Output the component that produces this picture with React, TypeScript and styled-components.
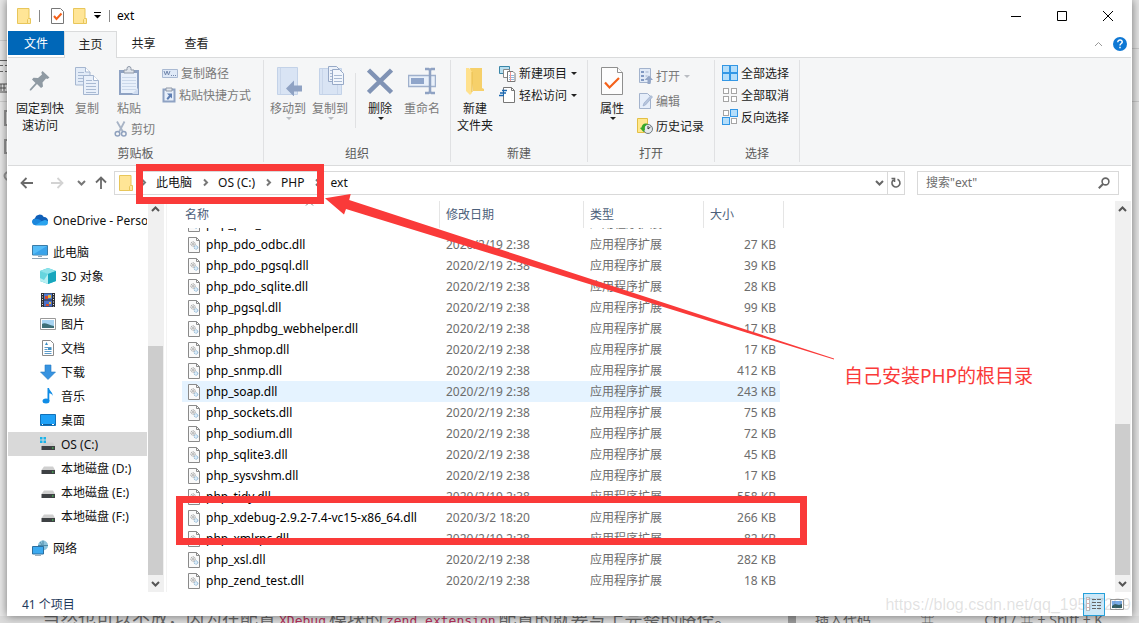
import React from "react";
import styled, { createGlobalStyle } from "styled-components";

const GlobalStyle = createGlobalStyle`
  * { box-sizing: border-box; }
  html, body { margin: 0; padding: 0; }
  body {
    font-family: "Noto Sans", "Noto Sans CJK SC", sans-serif;
    font-size: 12px;
    line-height: 17px;
    color: #1a1a1a;
    overflow: hidden;
  }
  button, input { font: inherit; color: inherit; background: none; border: 0; padding: 0; margin: 0; }
  svg { display: block; flex: none; }
`;

/* ---------- Desktop and the page behind the window ---------- */

const Desktop = styled.div`
  display: grid;
  grid-template-columns: 7px minmax(0, 1fr) 7px;
  grid-template-rows: minmax(0, 1fr) 7px;
  height: 100vh;
  background: #e6e6e6;
  overflow: hidden;
`;

const LeftEdge = styled.div`
  background: #e9e9e9;
  overflow: hidden;
`;

const RightEdge = styled.div`
  background: #e4e4e4;
  overflow: hidden;
`;

const BottomEdge = styled.div`
  grid-column: 1 / -1;
  display: flex;
  align-items: center;
  height: 7px;
  background: #dcdcdc;
  color: #666;
  white-space: nowrap;
  overflow: hidden;
`;

const Article = styled.p`
  flex: 0 0 788px;
  margin: 0;
  padding-left: 42px;
  font-size: 18px;
  line-height: 24px;
`;

const Code = styled.code`
  font-family: "DejaVu Sans Mono", monospace;
  font-size: 13px;
  color: #b5305a;
  margin: 0 3px;
`;

const PageBar = styled.span`
  width: 8px;
  height: 7px;
  background: #999;
`;

const Shortcuts = styled.div`
  display: flex;
  flex: 1;
  padding: 0 36px 0 19px;
  font-size: 14px;
  line-height: 20px;
  justify-content: space-between;
`;

/* ---------- Window frame ---------- */

const Window = styled.main`
  position: relative;
  display: flex;
  flex-direction: column;
  min-width: 0;
  background: #fff;
  border: solid #fff;
  border-width: 0 1px;
  box-shadow: 0 0 9px rgba(0, 0, 0, 0.5);
`;

const TitleBar = styled.header`
  display: flex;
  align-items: center;
  height: 31px;
  padding-left: 9px;
`;

const QuickAccess = styled.div`
  display: flex;
  align-items: center;
  gap: 8px;
`;

const QuickButtons = styled.div`
  display: flex;
  align-items: center;
  gap: 5px;
`;

const QuickSeparator = styled.span`
  width: 1px;
  height: 12px;
  background: #888;
`;

const Title = styled.h1`
  margin: 0 0 0 7px;
  flex: 1;
  font-size: 12px;
  font-weight: 400;
  color: #000;
`;

const CaptionButton = styled.button`
  display: flex;
  align-items: center;
  justify-content: center;
  width: 46px;
  height: 30px;
`;

const IconButton = styled.button<{ $width?: number }>`
  display: flex;
  align-items: center;
  justify-content: center;
  width: ${(p) => (p.$width ? `${p.$width}px` : "auto")};
`;

/* ---------- Ribbon ---------- */

const Tabs = styled.nav`
  display: flex;
  align-items: flex-start;
  height: 27px;
  border-bottom: 1px solid #dadbdc;
`;

const Tab = styled.button<{ $kind?: "file" | "active" }>`
  width: ${(p) => (p.$kind === "file" ? 56 : 53)}px;
  height: ${(p) => (p.$kind === "active" ? 27 : 24)}px;
  padding-bottom: ${(p) => (p.$kind === "active" ? 2 : 0)}px;
  color: ${(p) => (p.$kind === "file" ? "#fff" : "#222")};
  background: ${(p) => (p.$kind === "file" ? "#0067b8" : p.$kind === "active" ? "#f5f6f7" : "none")};
  border: ${(p) => (p.$kind === "active" ? "1px solid #dadbdc" : "0")};
  border-bottom: 0;
`;

const TabTools = styled.div`
  display: flex;
  align-items: center;
  gap: 10px;
  height: 26px;
  margin-left: auto;
  padding-right: 4px;
`;

const Ribbon = styled.section`
  display: flex;
  height: 108px;
  padding: 2px 0 3px;
  background: #f5f6f7;
  border-bottom: 1px solid #dadbdc;
`;

const Group = styled.section<{ $width: number }>`
  display: flex;
  flex-direction: column;
  justify-content: space-between;
  width: ${(p) => p.$width}px;
  padding: 0 3px;
  border-right: 1px solid #e0e1e3;
`;

const GroupItems = styled.div`
  display: flex;
`;

const GroupLabel = styled.h2`
  margin: 0;
  font-size: 12px;
  font-weight: 400;
  color: #5a5a5a;
  text-align: center;
`;

const LargeButton = styled.button<{ $width?: number; $muted?: boolean }>`
  display: flex;
  flex: none;
  flex-direction: column;
  align-items: center;
  width: ${(p) => p.$width ?? 42}px;
  padding-top: 5px;
  color: ${(p) => (p.$muted ? "#7a7a7a" : "#1a1a1a")};
  white-space: nowrap;
`;

const LargeIcon = styled.span`
  display: flex;
  align-items: center;
  height: 35px;
  padding-bottom: 4px;
`;

const ToolColumn = styled.div<{ $top?: number; $gap?: number; $left?: number }>`
  display: flex;
  flex-direction: column;
  align-items: flex-start;
  gap: ${(p) => p.$gap ?? 4}px;
  margin-left: ${(p) => p.$left ?? 4}px;
  padding-top: ${(p) => p.$top ?? 4}px;
`;

const PasteColumn = styled.div`
  display: flex;
  flex-direction: column;
  gap: 3px;
  width: 48px;
`;

const SmallButton = styled.button<{ $muted?: boolean }>`
  display: flex;
  align-items: center;
  gap: 3px;
  height: 18px;
  color: ${(p) => (p.$muted ? "#7a7a7a" : "#1a1a1a")};
  white-space: nowrap;
`;

const ItemSeparator = styled.span`
  width: 1px;
  height: 55px;
  margin: 13px 3px 0 4px;
  background: #e0e1e3;
`;

/* ---------- Address row ---------- */

const AddressRow = styled.div`
  display: flex;
  align-items: center;
  height: 35px;
  padding: 0 12px 2px 4px;
`;

const AddressBox = styled.div`
  display: flex;
  flex: 1;
  align-items: center;
  height: 24px;
  margin-left: 2px;
  padding-left: 4px;
  border: 1px solid #d9d9d9;
`;

const Crumbs = styled.ol`
  display: flex;
  flex: 1;
  margin: 0 0 0 -3px;
  padding: 0;
  list-style: none;
`;

const Crumb = styled.li`
  display: flex;
  align-items: center;
`;

const CrumbLink = styled.a`
  color: #111;
  text-decoration: none;
`;

const CrumbArrow = styled.span`
  display: flex;
  justify-content: center;
  width: 26px;
`;

const Refresh = styled.button`
  display: flex;
  align-items: center;
  justify-content: center;
  width: 17px;
  height: 22px;
  border-left: 1px solid #d9d9d9;
`;

const SearchBox = styled.label`
  display: flex;
  align-items: center;
  width: 202px;
  height: 24px;
  margin-left: 12px;
  padding: 0 8px;
  border: 1px solid #d9d9d9;
`;

const SearchInput = styled.input`
  flex: 1;
  min-width: 0;
  outline: 0;
  &::placeholder { color: #6d6d6d; opacity: 1; }
`;

/* ---------- Body ---------- */

const Body = styled.div`
  display: flex;
  flex: 1;
  min-height: 0;
`;

const Navigation = styled.nav`
  display: flex;
  flex-direction: column;
  gap: 8px;
  width: 140px;
  padding: 7px 1px 0 0;
`;

const NavSection = styled.div`
  overflow: hidden;
`;

const NavItem = styled.a<{ $nested?: boolean; $selected?: boolean }>`
  display: flex;
  align-items: center;
  gap: 5px;
  height: 24px;
  padding-left: ${(p) => (p.$nested ? 32 : 24)}px;
  color: #111;
  background: ${(p) => (p.$selected ? "#d9d9d9" : "transparent")};
  text-decoration: none;
  white-space: nowrap;
`;

const ScrollTrack = styled.div`
  display: flex;
  flex-direction: column;
  width: 16px;
  background: #f0f0f0;
`;

const ScrollButton = styled.button`
  display: flex;
  align-items: center;
  justify-content: center;
  height: 17px;
  padding-right: 1px;
`;

const ScrollSpace = styled.div<{ $grow: number; $thumb?: boolean }>`
  flex: ${(p) => p.$grow} 1 0;
  margin-right: 1px;
  background: ${(p) => (p.$thumb ? "#cdcdcd" : "transparent")};
`;

const Files = styled.section`
  display: flex;
  flex: 1;
  min-width: 0;
  margin-left: 2px;
  padding-left: 15px;
  border-left: 1px solid #f3f3f3;
`;

const FileTable = styled.table`
  display: flex;
  flex: 1;
  flex-direction: column;
  min-width: 0;
`;

const TableHead = styled.thead`
  display: block;
`;

const HeaderRow = styled.tr`
  display: grid;
  grid-template-columns: 258px 144px 120px 80px;
  height: 27px;
`;

const HeaderCell = styled.th<{ $first?: boolean }>`
  position: relative;
  padding: 5px 0 0 ${(p) => (p.$first ? 3 : 6)}px;
  font-weight: 400;
  color: #4c607a;
  text-align: left;
  border-right: 1px solid #e5e5e5;
`;

const SortMark = styled.svg`
  position: absolute;
  top: 0;
  left: 48%;
`;

const TableBody = styled.tbody`
  display: flex;
  flex: 1;
  flex-direction: column;
  justify-content: flex-end;
  min-height: 0;
  padding-bottom: 1px;
  overflow: hidden;
`;

const FileRow = styled.tr<{ $hover?: boolean }>`
  display: grid;
  flex: none;
  grid-template-columns: 258px 144px 120px 76px;
  align-items: center;
  width: 598px;
  height: 21px;
  background: ${(p) => (p.$hover ? "#e5f3ff" : "transparent")};
`;

const NameCell = styled.td`
  display: flex;
  align-items: center;
  gap: 6px;
  padding: 0 0 0 6px;
  color: #000;
  white-space: nowrap;
`;

const InfoCell = styled.td<{ $right?: boolean }>`
  padding: 0 ${(p) => (p.$right ? 4 : 0)}px 0 6px;
  color: #6d6d6d;
  text-align: ${(p) => (p.$right ? "right" : "left")};
`;

const StatusBar = styled.footer`
  display: flex;
  align-items: center;
  height: 24px;
  padding: 0 7px 0 14px;
  color: #1e395b;
`;

const ViewButtons = styled.div`
  display: flex;
  align-items: center;
  gap: 4px;
  margin-left: auto;
`;

const ViewButton = styled.button<{ $on?: boolean }>`
  display: flex;
  align-items: center;
  justify-content: center;
  width: ${(p) => (p.$on ? 22 : 15)}px;
  height: 23px;
  background: ${(p) => (p.$on ? "#cce8f8" : "none")};
  border: ${(p) => (p.$on ? "1px solid #26a0da" : "0")};
`;

/* ---------- Marks drawn over the window ---------- */

const MarkBox = styled.div<{ $x: number; $y: number; $w: number; $h: number }>`
  position: absolute;
  left: ${(p) => p.$x}px;
  top: ${(p) => p.$y}px;
  width: ${(p) => p.$w}px;
  height: ${(p) => p.$h}px;
  border: 7px solid #fa3a39;
  pointer-events: none;
`;

const MarkArrow = styled.svg`
  position: absolute;
  left: 316px;
  top: 190px;
  pointer-events: none;
`;

const MarkNote = styled.p`
  position: absolute;
  left: 836px;
  top: 363px;
  margin: 0;
  font-size: 19px;
  line-height: 26px;
  color: #fa3a39;
`;

const Watermark = styled.span`
  position: absolute;
  right: 0;
  bottom: 0;
  font-family: "Liberation Sans", sans-serif;
  font-size: 16px;
  line-height: 22px;
  color: rgba(120, 120, 120, 0.22);
`;

/* ---------- Icons ---------- */

const Folder = () => (
  <svg width="14" height="16" viewBox="0 0 14 16">
    <path d="M.5.5h11.500v15H.5z" fill="#ffe596" stroke="#e8c65a" />
    <path d="M11.500 10.500h2v5h-3v-4z" fill="#ffe9a5" stroke="#e8c65a" />
  </svg>
);

const CheckDoc = ({ large }: { large?: boolean }) => (
  <svg width={large ? 22 : 13} height={large ? 30 : 16} viewBox={large ? "0 0 22 30" : "0 0 13 16"}>
    {large ? (
      <>
        <path d="M.5 1.500h16l5 5v22H.5z" fill="#fdfdfd" stroke="#8f8f8f" />
        <path d="M16.500 1.500v5h5" fill="#fff" stroke="#8f8f8f" />
        <path d="M4 16.500l4.500 5 9.500-9.500" fill="none" stroke="#f4611a" strokeWidth="2.200" />
      </>
    ) : (
      <>
        <path d="M.5.5h9l3 3v12H.5z" fill="#fff" stroke="#777" />
        <path d="M3 8l2.500 3 5-5.500" fill="none" stroke="#f4611a" strokeWidth="2" />
      </>
    )}
  </svg>
);

const DropArrow = ({ muted }: { muted?: boolean }) => (
  <svg width="7" height="3" viewBox="0 0 7 3">
    <path d="M1 0h6L4 3z" fill={muted ? "#b9bcc2" : "#222"} />
  </svg>
);

const PinIcon = () => (
  <svg width="22" height="22" viewBox="0 0 22 22">
    <path d="M13.500 1l7 6.500-2 1.500-1.500-.5-3.500 4 .5 4-2 1.500-4-4L2 20.500H.8v-1.200L6.500 13 3 9.500 4.500 7.800 9 8l4-3.500-.7-2z" fill="#8f9aa3" />
  </svg>
);

const lines = (x: number, y: number, w: number, n: number, step = 3, c = "#a9bad3") =>
  Array.from({ length: n }, (_, i) => <path key={i} d={`M${x} ${y + i * step}h${w}`} stroke={c} fill="none" />);

const CopyIcon = () => (
  <svg width="24" height="28" viewBox="0 0 24 28">
    <path d="M.5.5h10l4.500 4.500v13H.5z" fill="#e3ecf8" stroke="#a5b6d0" />
    <path d="M10.500.5v4.500h4.500" fill="#fff" stroke="#a5b6d0" />
    {lines(3, 5.5, 6, 1)}
    {lines(3, 8.5, 10, 3)}
    <path d="M8.500 8.500h10l5 5v14h-15z" fill="#e9f0fa" stroke="#a5b6d0" />
    <path d="M18.500 8.500v5h5" fill="#fff" stroke="#a5b6d0" />
    {lines(11, 13.5, 6, 1)}
    {lines(11, 16.5, 10, 4)}
  </svg>
);

const PasteIcon = () => (
  <svg width="20" height="29" viewBox="0 0 20 29">
    <path d="M0 4h20v25H0z" fill="#8ea2c3" />
    <path d="M2 7h16v20H2z" fill="#e8f0fb" />
    {lines(3, 11.5, 14, 5, 3, "#cbd8ea")}
    <path d="M5 7V4h3V2.500a2 2 0 0 1 4 0V4h3v3z" fill="#dfe4eb" stroke="#8f99a8" />
    <path d="M13 28l6-6v6z" fill="#cfdcf0" />
  </svg>
);

const ScissorsIcon = () => (
  <svg width="14" height="16" viewBox="0 0 14 16">
    <path d="M3 .5l6 10.500M10.500.5L5 11" fill="none" stroke="#a8b4c6" strokeWidth="1.800" />
    <circle cx="3.500" cy="12.800" r="2.300" fill="none" stroke="#8fa1be" strokeWidth="1.500" />
    <circle cx="9.800" cy="12.800" r="2.300" fill="none" stroke="#8fa1be" strokeWidth="1.500" />
  </svg>
);

const PathIcon = () => (
  <svg width="16" height="9" viewBox="0 0 16 9">
    <path d="M.5.5h15v8H.5z" fill="#dfe9f7" stroke="#a9b9d2" />
    <path d="M2 2l1.500 4L5 2l1.500 4L8 2M9 6.500h1M11 6.500h1M13 6.500h1" fill="none" stroke="#7388ad" />
  </svg>
);

const ShortcutIcon = () => (
  <svg width="14" height="16" viewBox="0 0 14 16">
    <path d="M1.500 2.500h11v12h-11z" fill="#e8f0fb" stroke="#8ea2c3" strokeWidth="2" />
    <path d="M4 1h6v3H4z" fill="#e3e7ed" stroke="#8f99a8" />
    <path d="M5 6.500h5v5L8.500 10 6 13l-1.500-1.500L7 8.500z" fill="#5f7fb3" />
  </svg>
);

const MoveToIcon = () => (
  <svg width="28" height="30" viewBox="0 0 28 30">
    <path d="M3.500 1.500h20v27h-20z" fill="#d9e4f4" stroke="#c3d2e8" />
    <path d="M6.500 2v26" stroke="#c9d6ea" />
    <path d="M12 22.500l8-8v5h8v6h-8v5z" fill="#8fa2c3" />
  </svg>
);

const CopyToIcon = () => (
  <svg width="28" height="32" viewBox="0 0 28 32">
    <path d="M3.500 3.500h22v26h-22z" fill="#d9e4f4" stroke="#c3d2e8" />
    <path d="M6.500 4v25M21.500 20v9" stroke="#c9d6ea" />
    <path d="M12.500 1.500h8l3 3v12h-11z" fill="#edf2fa" stroke="#97a9c7" />
    {lines(14, 5.5, 5, 4)}
    <path d="M16.500 4.500h7l4 4v11h-11z" fill="#f2f6fc" stroke="#97a9c7" />
    {lines(18, 10.5, 8, 3)}
  </svg>
);

const DeleteIcon = () => (
  <svg width="26" height="28" viewBox="0 0 26 28">
    <path d="M1.500 3l23 22.500M24.500 3l-23 22.500" stroke="#8093b5" strokeWidth="4.500" fill="none" />
  </svg>
);

const RenameIcon = () => (
  <svg width="28" height="28" viewBox="0 0 28 28">
    <path d="M.5 8.500h27v11H.5z" fill="#e9f0fa" stroke="#9fb0cc" strokeWidth="1.500" />
    <path d="M3 11h13v6H3z" fill="#8fa5ca" />
    <path d="M17 2h3.500l1.500 1 1.500-1H27M17 26h3.500l1.500-1 1.500 1H27M22 3v22" fill="none" stroke="#8fa2c3" strokeWidth="2.500" />
  </svg>
);

const NewFolderIcon = () => (
  <svg width="20" height="28" viewBox="0 0 20 28">
    <path d="M5 1h12v20l2 1v2L8 24z" fill="#f6d06a" />
    <path d="M1 1h3l3 4v21l-2 2-4-4z" fill="#ffe18d" />
    <path d="M7 5v20" stroke="#e9bd4d" />
  </svg>
);

const NewItemIcon = () => (
  <svg width="17" height="17" viewBox="0 0 17 17">
    <path d="M.5 1.500h10v7H.5z" fill="#b8dff0" stroke="#3a86a8" />
    <path d="M4.500 4.500h6v8h-6z" fill="#fff" stroke="#8a8a8a" />
    <path d="M8.500 6.500h5.500l2 2v8H8.500z" fill="#fff" stroke="#777" />
    <path d="M10 10.500h5M10 12.500h5M10 14.500h5" stroke="#8db7df" />
    <path d="M11.500 7v9" stroke="#ee9696" />
  </svg>
);

const EasyAccessIcon = () => (
  <svg width="17" height="17" viewBox="0 0 17 17">
    <path d="M4.500.5h8l3 3v12h-11z" fill="#fff" stroke="#777" />
    <path d="M12.500.5v3h3" fill="none" stroke="#777" />
    <path d="M3 3.500h5M1 6h6M0 8.500h5" stroke="#1c68b0" strokeWidth="1.300" />
    <path d="M4.500 4v5" stroke="#1c68b0" />
  </svg>
);

const OpenIcon = () => (
  <svg width="16" height="16" viewBox="0 0 16 16">
    <path d="M2.500.5h11v14h-11z" fill="#e1eaf7" stroke="#a3b3cd" />
    <path d="M4 3h3v2H4zM4 7h3v2H4zM4 11h3v2H4z" fill="#8199c2" />
    <path d="M8.500 4h3M8.500 8h2" stroke="#a3b3cd" />
    <path d="M7.500 12l4.500-4.500L16 12h-2.500v4h-3v-4z" fill="#93a6c7" />
  </svg>
);

const EditIcon = () => (
  <svg width="16" height="16" viewBox="0 0 16 16">
    <path d="M2.500.5h8l3 3v12h-11z" fill="#e6eefa" stroke="#a3b3cd" />
    <path d="M6 13l1-3 7-7.500 1.500 1.500L8.500 12z" fill="#b6c4dc" stroke="#94a7c7" strokeWidth=".6" />
  </svg>
);

const HistoryIcon = () => (
  <svg width="16" height="16" viewBox="0 0 16 16">
    <path d="M.5.5h10v14H.5z" fill="#ffe88e" stroke="#e3bf45" />
    <circle cx="11" cy="11" r="4.500" fill="#e5e9ec" stroke="#6f7a80" />
    <path d="M11 8v3l2.500-2" stroke="#333" fill="none" />
    <path d="M3 10l3.500 4 1.500-2.500C7.500 9 8 7 11 6 7 4.500 5 6.500 4.500 9.500z" fill="#37a829" />
  </svg>
);

const SelectIcon = ({ on }: { on: boolean[] }) => (
  <svg width="16" height="16" viewBox="0 0 16 16">
    {on.map((active, i) => {
      const x = (i % 2) * 8;
      const y = Math.floor(i / 2) * 8;
      return active ? (
        <rect key={i} x={x + 0.5} y={y + 0.5} width="7" height="7" fill="#b5defa" stroke="#3397e5" />
      ) : (
        <rect key={i} x={x + 1.5} y={y + 1.5} width="5" height="5" fill="#fff" stroke="#a5a5a5" />
      );
    })}
  </svg>
);

const Chevron = ({ dir, color = "#555", w = 2 }: { dir: "up" | "down" | "right"; color?: string; w?: number }) => {
  const d = { up: "M1 6l3.500-3.500L8 6", down: "M1 3l3.500 3.500L8 3", right: "M3 1.500l3 3-3 3" }[dir];
  return (
    <svg width="9" height="9" viewBox="0 0 9 9">
      <path d={d} fill="none" stroke={color} strokeWidth={w} />
    </svg>
  );
};

const Arrow = ({ dir, color }: { dir: "left" | "right" | "up"; color: string }) => (
  <svg width="14" height="14" viewBox="0 0 14 14">
    <path
      d={{ left: "M13 7H2M6.500 2l-5 5 5 5", right: "M1 7h11M7.500 2l5 5-5 5", up: "M7 13V2M2 6.500l5-5 5 5" }[dir]}
      fill="none"
      stroke={color}
      strokeWidth="1.800"
    />
  </svg>
);

const DllIcon = () => (
  <svg width="12" height="16" viewBox="0 0 12 16">
    <path d="M.5.5h8l3 3v12H.5z" fill="#fafafa" stroke="#8a8a8a" />
    <path d="M8.500.5v3h3" fill="none" stroke="#8a8a8a" />
    <circle cx="5" cy="7" r="2.200" fill="#eee" stroke="#999" strokeDasharray="1.200 .6" />
    <circle cx="5" cy="7" r=".8" fill="#888" />
    <circle cx="8" cy="10.500" r="1.800" fill="#dcecf8" stroke="#85b0d2" strokeDasharray="1.200 .6" />
  </svg>
);

const DriveShape = () => (
  <>
    <path d="M4 6.500h9l2 3.500H1.500z" fill="#cfcfcf" />
    <path d="M1.500 10H15v4H1.500z" fill="#3e4144" />
    <path d="M12 11.500h1.500v1H12z" fill="#4be35a" />
  </>
);

const navIcons: Record<string, React.ReactNode> = {
  cloud: (
    <>
      <path d="M3.500 13A3.500 3.500 0 0 1 3 6.200 4.800 4.800 0 0 1 11.800 5 4 4 0 0 1 16 9.500z" fill="#0f5fb8" />
      <path d="M3.500 13.200A3.400 3.400 0 0 1 1 7.500C5 5.500 8 8 9.500 9l6 3c-.6.900-1.500 1.200-2.500 1.200z" fill="#1b87dc" />
      <path d="M3.200 13.200l7-4.200 2.500-1c2 0 3.300 1.100 3.300 2.700s-1.300 2.500-2.800 2.500z" fill="#2ba4ee" />
    </>
  ),
  pc: (
    <>
      <path d="M.5 1.500h15v9.500H.5z" fill="#55bcf7" stroke="#3a7ca8" />
      <path d="M1 10.500L15 2v8.500z" fill="#3aa3ea" />
      <path d="M6 12.500h4M0 14.500h16" stroke="#90a4b4" />
    </>
  ),
  cube: (
    <>
      <path d="M8 0l8 3v10l-8 3-8-3V3z" fill="#35c5d6" />
      <path d="M8 0l8 3-8 3-8-3z" fill="#8ee3ea" />
      <path d="M0 3l8 3v10l-8-3z" fill="#b8eff2" />
      <path d="M0 3l8 3-4 6-4-2z" fill="#66d5de" />
      <path d="M8 6l8-3v10l-8 3z" fill="#17a6bd" />
    </>
  ),
  film: (
    <>
      <path d="M1 1h14v14H1z" fill="#2c2f36" />
      <path d="M4 1.500h8v6H4z" fill="#4f7ad0" />
      <path d="M4 8.500h8v6H4z" fill="#4a6fc8" />
      <path d="M5 4h3v3H5zM6 12h3v2H6z" fill="#d34b2d" />
      <path d="M8 3h3v3H8zM9 10h2v2H9z" fill="#e8b93f" />
      <path d="M2.500 2v13M13.500 2v13" stroke="#e5e5e5" strokeDasharray="1 1.500" />
    </>
  ),
  picture: (
    <>
      <path d="M.5 2.500h15v11H.5z" fill="#fff" stroke="#999" />
      <path d="M2 4h12v8H2z" fill="#a8d4f2" />
      <path d="M2 8c3-2 6 1 12 2v2H2z" fill="#3d6f78" />
    </>
  ),
  doc: (
    <>
      <path d="M2.500.5h8l3 3v12h-11z" fill="#fff" stroke="#8a8a8a" />
      <path d="M4.500 7.500h7M4.500 9.500h3M4.500 11.500h7M4.500 13.500h7" stroke="#5c9bc9" />
      <path d="M5 5l1.500-3L8 5M8 8h3.500v2H8z" fill="#3d8fc4" />
    </>
  ),
  download: <path d="M5 1h6v7h4.500L8 15.500.5 8H5z" fill="#3793e0" stroke="#2478c4" strokeWidth=".6" />,
  music: (
    <>
      <path d="M7.500 0H9c.5 3 3.800 4 3.800 8-.8-1.800-2-2.500-3.500-2.700V13H7.500z" fill="#0f8ce6" />
      <ellipse cx="6" cy="13" rx="3.500" ry="2.500" fill="#0f8ce6" />
    </>
  ),
  desktop: (
    <>
      <path d="M.5 2.500h15v11H.5z" fill="#1ea1f7" stroke="#1271b8" />
      <path d="M1 12.500h14" stroke="#0f5f9c" />
      <path d="M2 12.500h1M12 12.500h2" stroke="#fff" />
    </>
  ),
  osDrive: (
    <>
      <DriveShape />
      <path d="M0 1h2.500v2.500H0zM3.500 1H6v2.500H3.500zM0 4.500h2.500V7H0zM3.500 4.500H6V7H3.500z" fill="#19b3ea" />
    </>
  ),
  drive: <DriveShape />,
  network: (
    <>
      <circle cx="11" cy="5.500" r="5" fill="#8cc3dc" />
      <path d="M6 5.500h10M11 .5v10M8 2c2 2 2 5 0 8" stroke="#4d8aa8" fill="none" />
      <path d="M.5 6.500h11v7.500H.5z" fill="#3caaf0" stroke="#2c6f9f" />
      <path d="M3 15.500h6" stroke="#9fb2bd" />
    </>
  ),
};

/* ---------- Data ---------- */

type NavEntry = { icon: string; label: string; nested?: boolean; selected?: boolean };

const navigation: NavEntry[][] = [
  [{ icon: "cloud", label: "OneDrive - Personal" }],
  [
    { icon: "pc", label: "此电脑" },
    { icon: "cube", label: "3D 对象", nested: true },
    { icon: "film", label: "视频", nested: true },
    { icon: "picture", label: "图片", nested: true },
    { icon: "doc", label: "文档", nested: true },
    { icon: "download", label: "下载", nested: true },
    { icon: "music", label: "音乐", nested: true },
    { icon: "desktop", label: "桌面", nested: true },
    { icon: "osDrive", label: "OS (C:)", nested: true, selected: true },
    { icon: "drive", label: "本地磁盘 (D:)", nested: true },
    { icon: "drive", label: "本地磁盘 (E:)", nested: true },
    { icon: "drive", label: "本地磁盘 (F:)", nested: true },
  ],
  [{ icon: "network", label: "网络" }],
];

const files: [name: string, size: number, date?: string][] = [
  ["php_pdo_oci.dll", 27],
  ["php_pdo_odbc.dll", 27],
  ["php_pdo_pgsql.dll", 39],
  ["php_pdo_sqlite.dll", 28],
  ["php_pgsql.dll", 99],
  ["php_phpdbg_webhelper.dll", 17],
  ["php_shmop.dll", 17],
  ["php_snmp.dll", 412],
  ["php_soap.dll", 243],
  ["php_sockets.dll", 75],
  ["php_sodium.dll", 72],
  ["php_sqlite3.dll", 45],
  ["php_sysvshm.dll", 17],
  ["php_tidy.dll", 558],
  ["php_xdebug-2.9.2-7.4-vc15-x86_64.dll", 266, "2020/3/2 18:20"],
  ["php_xmlrpc.dll", 82],
  ["php_xsl.dll", 282],
  ["php_zend_test.dll", 18],
];

/* ---------- Parts ---------- */

type ToolProps = { icon: React.ReactNode; label: React.ReactNode; muted?: boolean; drop?: boolean; width?: number };

const LargeTool = ({ icon, label, muted, drop, width }: ToolProps) => (
  <LargeButton $muted={muted} $width={width}>
    <LargeIcon>{icon}</LargeIcon>
    <span>{label}</span>
    {drop && <DropArrow muted={muted} />}
  </LargeButton>
);

const SmallTool = ({ icon, label, muted, drop }: ToolProps) => (
  <SmallButton $muted={muted}>
    {icon}
    <span>{label}</span>
    {drop && <DropArrow muted={muted} />}
  </SmallButton>
);

const RibbonGroup = ({ label, width, children }: { label: string; width: number; children: React.ReactNode }) => (
  <Group $width={width}>
    <GroupItems>{children}</GroupItems>
    <GroupLabel>{label}</GroupLabel>
  </Group>
);

const Scrollbar = ({ before, thumb }: { before: number; thumb: number }) => (
  <ScrollTrack>
    <ScrollButton aria-label="向上滚动"><Chevron dir="up" /></ScrollButton>
    <ScrollSpace $grow={before} />
    <ScrollSpace $grow={thumb} $thumb />
    <ScrollButton aria-label="向下滚动"><Chevron dir="down" /></ScrollButton>
  </ScrollTrack>
);

export default function App() {
  return (
    <Desktop>
      <GlobalStyle />
      <LeftEdge>
        <svg width="7" height="200" viewBox="0 0 7 200">
          <path d="M0 40.500h7M0 101.500h7" stroke="#cfcfcf" />
          <path d="M0 60.500h7M0 65.500h3M5 65.500h2M0 71.500h3M5 71.500h2" stroke="#666" />
          <path d="M0 84h7M1 84v7M4 84v7M0 88h6M0 92h7" stroke="#555" fill="none" />
          <path d="M7 111H5v14h2M7 140H5v13h2M7 172q-5 4 0 8" stroke="#999" fill="none" strokeWidth="2" />
        </svg>
      </LeftEdge>

      <Window>
        <TitleBar>
          <QuickAccess>
            <Folder />
            <QuickSeparator />
            <QuickButtons>
              <IconButton $width={18} aria-label="属性"><CheckDoc /></IconButton>
              <IconButton $width={18} aria-label="新建文件夹"><Folder /></IconButton>
              <IconButton aria-label="自定义快速访问工具栏">
                <svg width="7" height="7" viewBox="0 0 7 7">
                  <path d="M0 .5h7" stroke="#000" />
                  <path d="M0 3h7L3.500 6.500z" fill="#000" />
                </svg>
              </IconButton>
            </QuickButtons>
            <QuickSeparator />
          </QuickAccess>
          <Title>ext</Title>
          <CaptionButton aria-label="最小化">
            <svg width="10" height="10" viewBox="0 0 10 10"><path d="M0 5.500h10" stroke="#000" /></svg>
          </CaptionButton>
          <CaptionButton aria-label="最大化">
            <svg width="10" height="10" viewBox="0 0 10 10"><path d="M.5.5h9v9h-9z" stroke="#000" fill="none" /></svg>
          </CaptionButton>
          <CaptionButton aria-label="关闭">
            <svg width="10" height="10" viewBox="0 0 10 10"><path d="M0 0l10 10M10 0L0 10" stroke="#000" /></svg>
          </CaptionButton>
        </TitleBar>

        <Tabs>
          <Tab $kind="file">文件</Tab>
          <Tab $kind="active">主页</Tab>
          <Tab>共享</Tab>
          <Tab>查看</Tab>
          <TabTools>
            <IconButton aria-label="最小化功能区"><Chevron dir="up" color="#999" w={1} /></IconButton>
            <IconButton aria-label="帮助">
              <svg width="14" height="14" viewBox="0 0 14 14">
                <circle cx="7" cy="7" r="7" fill="#0f78d4" />
                <path d="M4.800 5.200c0-3 4.600-2.800 4.400-.1C9.100 6.600 7 6.500 7 8.500M7 9.700v1.600" fill="none" stroke="#fff" strokeWidth="1.500" />
              </svg>
            </IconButton>
          </TabTools>
        </Tabs>

        <Ribbon>
          <RibbonGroup label="剪贴板" width={256}>
            <LargeTool width={58} icon={<PinIcon />} label={<>固定到快<br />速访问</>} />
            <LargeTool width={36} icon={<CopyIcon />} label="复制" muted />
            <PasteColumn>
              <LargeTool width={48} icon={<PasteIcon />} label="粘贴" muted />
              <ToolColumn $top={0} $left={9}>
                <SmallTool icon={<ScissorsIcon />} label="剪切" muted />
              </ToolColumn>
            </PasteColumn>
            <ToolColumn $left={9}>
              <SmallTool icon={<PathIcon />} label="复制路径" muted />
              <SmallTool icon={<ShortcutIcon />} label="粘贴快捷方式" muted />
            </ToolColumn>
          </RibbonGroup>

          <RibbonGroup label="组织" width={187}>
            <LargeTool icon={<MoveToIcon />} label="移动到" muted drop />
            <LargeTool icon={<CopyToIcon />} label="复制到" muted drop />
            <ItemSeparator />
            <LargeTool icon={<DeleteIcon />} label="删除" drop />
            <LargeTool icon={<RenameIcon />} label="重命名" muted />
          </RibbonGroup>

          <RibbonGroup label="新建" width={137}>
            <LargeTool icon={<NewFolderIcon />} label={<>新建<br />文件夹</>} />
            <ToolColumn $left={3}>
              <SmallTool icon={<NewItemIcon />} label="新建项目" drop />
              <SmallTool icon={<EasyAccessIcon />} label="轻松访问" drop />
            </ToolColumn>
          </RibbonGroup>

          <RibbonGroup label="打开" width={127}>
            <LargeTool icon={<CheckDoc large />} label="属性" drop />
            <ToolColumn $top={7} $gap={7}>
              <SmallTool icon={<OpenIcon />} label="打开" muted drop />
              <SmallTool icon={<EditIcon />} label="编辑" muted />
              <SmallTool icon={<HistoryIcon />} label="历史记录" />
            </ToolColumn>
          </RibbonGroup>

          <RibbonGroup label="选择" width={85}>
            <ToolColumn>
              <SmallTool icon={<SelectIcon on={[true, true, true, true]} />} label="全部选择" />
              <SmallTool icon={<SelectIcon on={[false, false, false, false]} />} label="全部取消" />
              <SmallTool icon={<SelectIcon on={[false, true, true, false]} />} label="反向选择" />
            </ToolColumn>
          </RibbonGroup>
        </Ribbon>

        <AddressRow>
          <IconButton $width={30} aria-label="后退"><Arrow dir="left" color="#6a6a6a" /></IconButton>
          <IconButton $width={30} aria-label="前进"><Arrow dir="right" color="#d3d3d3" /></IconButton>
          <IconButton $width={18} aria-label="最近的位置"><Chevron dir="down" color="#777" /></IconButton>
          <IconButton $width={22} aria-label="向上"><Arrow dir="up" color="#6a6a6a" /></IconButton>
          <AddressBox>
            <Folder />
            <Crumbs>
              {["此电脑", "OS (C:)", "PHP", "ext"].map((part) => (
                <Crumb key={part}>
                  <CrumbArrow><Chevron dir="right" color="#777" /></CrumbArrow>
                  <CrumbLink href="#">{part}</CrumbLink>
                </Crumb>
              ))}
            </Crumbs>
            <IconButton $width={16} aria-label="上一个位置"><Chevron dir="down" color="#666" /></IconButton>
            <Refresh aria-label="刷新">
              <svg width="12" height="12" viewBox="0 0 12 12">
                <path d="M7.500 2.300a4 4 0 1 1-4 .5M1.500 1.500h3v3.500" fill="none" stroke="#666" strokeWidth="1.600" />
              </svg>
            </Refresh>
          </AddressBox>
          <SearchBox>
            <SearchInput type="search" placeholder={'搜索"ext"'} aria-label="搜索" />
            <svg width="12" height="12" viewBox="0 0 12 12">
              <circle cx="7.500" cy="4.500" r="3.400" fill="none" stroke="#666" strokeWidth="1.600" />
              <path d="M5 7L.8 11.200" stroke="#666" strokeWidth="2" />
            </svg>
          </SearchBox>
        </AddressRow>

        <Body>
          <Navigation>
            {navigation.map((section) => (
              <NavSection key={section[0].label}>
                {section.map((item) => (
                  <NavItem key={item.label} href="#" $nested={item.nested} $selected={item.selected}>
                    <svg width="16" height="16" viewBox="0 0 16 16">{navIcons[item.icon]}</svg>
                    {item.label}
                  </NavItem>
                ))}
              </NavSection>
            ))}
          </Navigation>
          <Scrollbar before={128} thumb={230} />
          <Files>
            <FileTable>
              <TableHead>
                <HeaderRow>
                  <HeaderCell $first>
                    名称
                    <SortMark width="9" height="5" viewBox="0 0 9 5">
                      <path d="M1 4.500L4.500 1 8 4.500" fill="none" stroke="#777" />
                    </SortMark>
                  </HeaderCell>
                  <HeaderCell>修改日期</HeaderCell>
                  <HeaderCell>类型</HeaderCell>
                  <HeaderCell>大小</HeaderCell>
                </HeaderRow>
              </TableHead>
              <TableBody>
                {files.map(([name, size, date = "2020/2/19 2:38"]) => (
                  <FileRow key={name} $hover={name === "php_soap.dll"}>
                    <NameCell><DllIcon />{name}</NameCell>
                    <InfoCell>{date}</InfoCell>
                    <InfoCell>应用程序扩展</InfoCell>
                    <InfoCell $right>{size} KB</InfoCell>
                  </FileRow>
                ))}
              </TableBody>
            </FileTable>
            <Scrollbar before={207} thumb={151} />
          </Files>
        </Body>

        <StatusBar>
          41 个项目
          <ViewButtons>
            <ViewButton $on aria-label="详细信息">
              <svg width="16" height="14" viewBox="0 0 16 14">
                <path d="M.5.5h3v13h-3z" fill="#fff" stroke="#888" strokeDasharray="1 1" />
                <path d="M6 2.500h4M11 2.500h4M6 5.500h4M11 5.500h4M6 8.500h4M11 8.500h4M6 11.500h4M11 11.500h4" stroke="#666" />
                <path d="M2 2v10" stroke="#c55" strokeDasharray="1 3" />
              </svg>
            </ViewButton>
            <ViewButton aria-label="大图标">
              <svg width="14" height="11" viewBox="0 0 14 11">
                <path d="M.5.5h13v10H.5z" fill="#fff" stroke="#999" />
                <path d="M2 2h10v7H2z" fill="#79abe6" />
                <path d="M2 7l3-2 4 1 3-1v4H2z" fill="#2f5c62" />
              </svg>
            </ViewButton>
          </ViewButtons>
        </StatusBar>

        <MarkBox $x={128} $y={164} $w={188} $h={40} />
        <MarkBox $x={168} $y={496} $w={631} $h={49} />
        <MarkArrow width="512" height="172" viewBox="0 0 512 172">
          <path d="M1 8.300L26.700 4l-1.500 6L510 168.500v1L22 19l-2 5.500z" fill="#fa3a39" />
        </MarkArrow>
        <MarkNote>自己安装PHP的根目录</MarkNote>
        <Watermark>https://blog.csdn.net/qq_19577209</Watermark>
      </Window>

      <RightEdge>
        <svg width="7" height="110" viewBox="0 0 7 110">
          <path d="M0 48.500h7M0 101.500h7" stroke="#c9c9c9" />
        </svg>
      </RightEdge>

      <BottomEdge>
        <Article>
          当然也可以不放，因为在配置<Code>XDebug</Code>模块的<Code>zend_extension</Code>配置的就要写上完整的路径。
        </Article>
        <PageBar />
        <Shortcuts>
          <span>插入代码</span>
          <span>⌘</span>
          <span>Ctrl / ⌘ + Shift + K</span>
        </Shortcuts>
      </BottomEdge>
    </Desktop>
  );
}
